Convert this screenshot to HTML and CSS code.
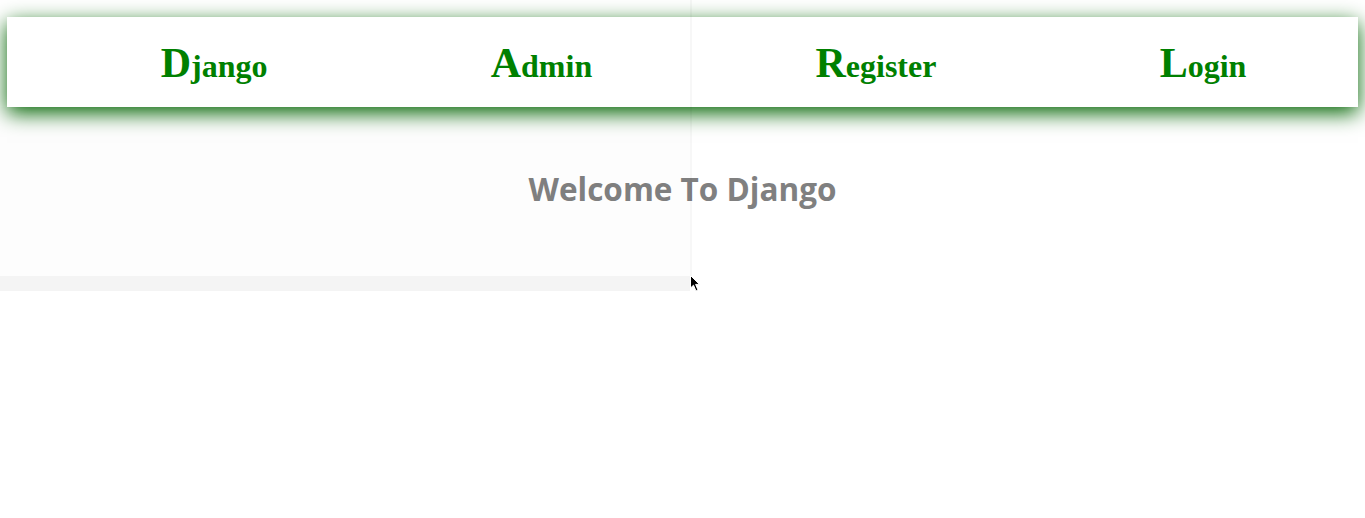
FILE: index.html
```html
<!DOCTYPE html>
<html lang="en">
<head>
<meta charset="utf-8">
<title>Django</title>
<link rel="stylesheet" href="styles.css">
</head>
<body>
<nav class="navbar">
  <ul class="nav-list">
    <li class="nav-item"><a href="#">Django</a></li>
    <li class="nav-item"><a href="#">Admin</a></li>
    <li class="nav-item"><a href="#">Register</a></li>
    <li class="nav-item"><a href="#">Login</a></li>
  </ul>
</nav>
<main class="content">
  <h1 class="welcome">Welcome To Django</h1>
</main>
<div class="strip"></div>
<div class="shade"></div>
<div class="vline"></div>
<svg class="cursor" width="12" height="18" viewBox="0 0 12 18"><path d="M0.5 0.5 L0.5 13 L3.5 10.2 L6 16 L8 15 L5.6 9.4 L9.5 9.4 Z" fill="#000" stroke="#fff" stroke-width="1"/></svg>
</body>
</html>
```
FILE: styles.css
```css
html, body {
  margin: 0;
  padding: 0;
  background: #ffffff;
}
body {
  position: relative;
  min-height: 518px;
}
.navbar {
  margin: 17px 7px 0 7px;
  height: 90px;
  background: #ffffff;
  box-shadow: 0 6px 20px rgba(0, 100, 0, 1);
  position: relative;
  z-index: 1;
}
.nav-list {
  list-style: none;
  margin: 0;
  padding: 0 0 0 42px;
  height: 100%;
  display: flex;
  justify-content: space-around;
  align-items: center;
}
.nav-item a {
  font-family: "Liberation Serif", "Times New Roman", serif;
  font-weight: bold;
  font-size: 32px;
  color: #008000;
  text-decoration: none;
  display: block;
  padding-top: 2px;
}
.nav-item a::first-letter {
  font-size: 42px;
}
.content {
  display: flex;
  justify-content: center;
  padding-top: 62px;
}
.welcome {
  margin: 0;
  font-family: "Open Sans", "Noto Sans", sans-serif;
  font-weight: bold;
  font-size: 31.5px;
  color: #808080;
  line-height: 40px;
}
.strip {
  margin-top: 67px;
  width: 690px;
  height: 15px;
  background: #f4f4f4;
}
.shade {
  position: absolute;
  left: 0;
  top: 107px;
  width: 690px;
  height: 169px;
  background: rgba(0, 0, 0, 0.007);
}
.vline {
  position: absolute;
  left: 690px;
  top: 0;
  width: 2px;
  height: 276px;
  background: rgba(0, 0, 0, 0.03);
  z-index: 2;
}
.cursor {
  position: absolute;
  left: 690px;
  top: 275px;
  z-index: 3;
}
```
